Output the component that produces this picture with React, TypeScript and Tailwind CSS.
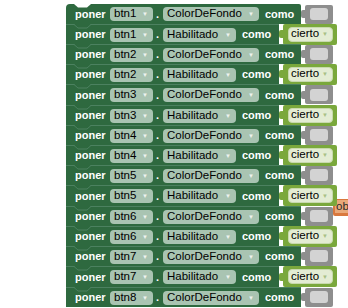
import React from "react";

type Row = { btn: string; prop: "ColorDeFondo" | "Habilitado"; h: number };

const rows: Row[] = [
  { btn: "btn1", prop: "ColorDeFondo", h: 20 },
  { btn: "btn1", prop: "Habilitado", h: 20 },
  { btn: "btn2", prop: "ColorDeFondo", h: 20 },
  { btn: "btn2", prop: "Habilitado", h: 20 },
  { btn: "btn3", prop: "ColorDeFondo", h: 21 },
  { btn: "btn3", prop: "Habilitado", h: 20 },
  { btn: "btn4", prop: "ColorDeFondo", h: 20 },
  { btn: "btn4", prop: "Habilitado", h: 20 },
  { btn: "btn5", prop: "ColorDeFondo", h: 20 },
  { btn: "btn5", prop: "Habilitado", h: 21 },
  { btn: "btn6", prop: "ColorDeFondo", h: 20 },
  { btn: "btn6", prop: "Habilitado", h: 20 },
  { btn: "btn7", prop: "ColorDeFondo", h: 20 },
  { btn: "btn7", prop: "Habilitado", h: 21 },
  { btn: "btn8", prop: "ColorDeFondo", h: 20 },
];

function Dropdown({ label, w }: { label: string; w: string }) {
  return (
    <div
      className={`${w} h-[14px] rounded-[4px] bg-[#a9c4b2] flex items-center justify-between pl-[4px] pr-[5px] text-[11.5px] leading-none text-black shrink-0`}
    >
      <span>{label}</span>
      <span className="text-[6px] text-[#eef3ef]">▼</span>
    </div>
  );
}

function GreySocket() {
  return (
    <div className="flex items-center self-stretch">
      <div className="w-[4px] h-[8px] bg-[#8e8e8e] rounded-l-[2px]" />
      <div className="w-[28px] h-[19px] bg-[#8e8e8e] rounded-[2px] flex items-center justify-center">
        <div className="w-[18px] h-[12px] bg-[#d3d3d3] rounded-[3px]" />
      </div>
    </div>
  );
}

function Cierto() {
  return (
    <div className="flex items-center self-stretch">
      <div className="w-[4px] h-[8px] bg-[#7aa83c] rounded-l-[2px]" />
      <div className="w-[54px] h-[21px] -my-[1px] bg-[#7aa83c] rounded-[2px] flex items-center pl-[5px]">
        <div className="w-[45px] h-[15px] rounded-[4px] bg-[#e3ecd3] border border-[#c8d9ae] flex items-center justify-between pl-[2px] pr-[4px] text-[11.5px] leading-none text-black">
          <span>cierto</span>
          <span className="text-[6px] text-[#a8bf85]">▼</span>
        </div>
      </div>
    </div>
  );
}

function Notch({ first }: { first: boolean }) {
  if (first) {
    return (
      <svg className="absolute left-[8px] top-0" width="17" height="4" viewBox="0 0 17 4">
        <polygon points="0,0 4,3.5 13,3.5 17,0" fill="#ffffff" />
      </svg>
    );
  }
  return (
    <svg className="absolute left-[8px] -top-[1px]" width="17" height="5" viewBox="0 0 17 5">
      <polygon points="0,0 4,3.5 13,3.5 17,0" fill="#2e693f" />
      <polyline points="0,0.5 4,4 13,4 17,0.5" fill="none" stroke="#4c8160" strokeWidth="1" />
    </svg>
  );
}

export default function App() {
  return (
    <div className="relative w-[348px] h-[308px] bg-white overflow-hidden font-['Liberation_Sans',Arial,sans-serif]">
      <div className="absolute left-[333px] top-[199px] w-[20px] h-[17px] bg-[#d9783e] rounded-l-[2px] flex items-start pl-[2px] pt-[1px]">
        <div className="h-[13px] pl-[1px] bg-[#e9a97a] text-[11.5px] leading-[13px] text-[#2a2a2a]">ob</div>
      </div>
      <div className="relative z-10 flex flex-col pt-[4px] pl-[66px]">
        {rows.map((r, i) => {
          const color = r.prop === "ColorDeFondo";
          return (
            <div key={i} className="flex items-center" style={{ height: r.h }}>
              <div
                className={`relative self-stretch flex items-center bg-[#2e693f] pl-[9px] ${
                  color ? "w-[235px]" : "w-[213px]"
                } ${i === 0 ? "rounded-tl-[4px] rounded-tr-[2px]" : "border-t border-[#4c8160]"}`}
              >
                <Notch first={i === 0} />
                <span className="text-[11px] font-bold text-white leading-none w-[31px] shrink-0 whitespace-nowrap">poner</span>
                <div className="ml-[4px]">
                  <Dropdown label={r.btn} w="w-[43px]" />
                </div>
                <span className="text-[11px] font-bold text-white leading-none ml-[3px] w-[7px] shrink-0">.</span>
                <div>
                  <Dropdown label={r.prop} w={color ? "w-[96px]" : "w-[73px]"} />
                </div>
                <span className="text-[11px] font-bold text-white leading-none ml-[6px] whitespace-nowrap">como</span>
              </div>
              {color ? <GreySocket /> : <Cierto />}
            </div>
          );
        })}
      </div>
    </div>
  );
}
